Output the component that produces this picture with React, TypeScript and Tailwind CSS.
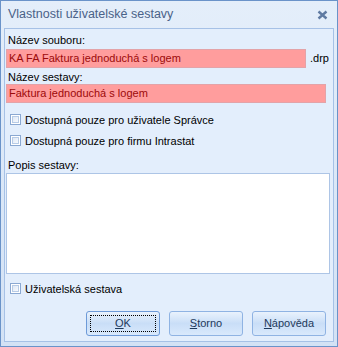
import React from "react";

const font = { fontFamily: '"Liberation Sans", Arial, sans-serif' };

function Check({ label }: { label: string }) {
  return (
    <div className="flex h-[11px] items-center gap-[4px] pl-[4px]">
      <span className="flex h-[11px] w-[11px] items-center justify-center border border-[#8aa8d2] bg-white">
        <span className="h-[7px] w-[7px] border border-[#b7cbe6] bg-gradient-to-br from-[#dfe8f5] to-[#f7fafe]" />
      </span>
      <span className="text-[11px] leading-[14px] text-black">{label}</span>
    </div>
  );
}

function Btn({ k, rest, focus }: { k: string; rest: string; focus?: boolean }) {
  return (
    <button
      className={
        "relative flex h-[25px] w-[74px] items-center justify-center rounded-[3px] border bg-gradient-to-b from-[#e9f2fd] via-[#c9def7] to-[#d9e9fc] text-[11px] text-[#1e395b] " +
        (focus ? "border-[#6d9ad8]" : "border-[#8fb3e3]")
      }
    >
      {focus && <span className="absolute inset-[3px] border border-dotted border-black" />}
      <span>
        <span className="underline">{k}</span>
        {rest}
      </span>
    </button>
  );
}

export default function App() {
  return (
    <div
      style={font}
      className="flex h-[347px] w-[338px] flex-col border border-[#6a93c9] bg-gradient-to-b from-[#e4eefa] to-[#d3e2f5]"
    >
      <div className="flex h-[27px] shrink-0 items-center justify-between pl-[7px] pr-[9px]">
        <span className="text-[12.5px] text-[#4a6288]">Vlastnosti uživatelské sestavy</span>
        <svg width="11" height="10" viewBox="0 0 11 10">
          <path d="M1.5 1.5 L9.5 8.5 M9.5 1.5 L1.5 8.5" stroke="#5f7aa2" strokeWidth="2.4" />
        </svg>
      </div>
      <div className="mx-[3px] mb-[4px] flex flex-1 flex-col border border-[#a6c1e6] bg-[#e3eefc] px-[1px] text-black">
        <div className="mt-[4px] h-[14px] pl-[2px] text-[11px] leading-[14px]">Název souboru:</div>
        <div className="mt-[2px] flex items-center gap-[4px]">
          <div className="flex h-[19px] w-[300px] items-center border border-[#e3a3a8] bg-[#ff9d9d] px-[2px] text-[11px] text-[#9c0a0a]">
            KA FA Faktura jednoduchá s logem
          </div>
          <span className="text-[11px]">.drp</span>
        </div>
        <div className="mt-[2px] h-[14px] pl-[2px] text-[11px] leading-[14px]">Název sestavy:</div>
        <div className="flex h-[19px] w-[320px] items-center border border-[#e3a3a8] bg-[#ff9d9d] px-[2px] text-[11px] text-[#9c0a0a]">
          Faktura jednoduchá s logem
        </div>
        <div className="mt-[11px]">
          <Check label="Dostupná pouze pro uživatele Správce" />
        </div>
        <div className="mt-[10px]">
          <Check label="Dostupná pouze pro firmu Intrastat" />
        </div>
        <div className="mt-[12px] h-[14px] pl-[2px] text-[11px] leading-[14px]">Popis sestavy:</div>
        <div className="mt-[1px] h-[101px] w-[324px] border border-[#adc5e6] bg-white" />
        <div className="mt-[9px]">
          <Check label="Uživatelská sestava" />
        </div>
        <div className="mt-[17px] flex gap-[9px] pl-[80px]">
          <Btn k="O" rest="K" focus />
          <Btn k="S" rest="torno" />
          <Btn k="N" rest="ápověda" />
        </div>
      </div>
    </div>
  );
}
